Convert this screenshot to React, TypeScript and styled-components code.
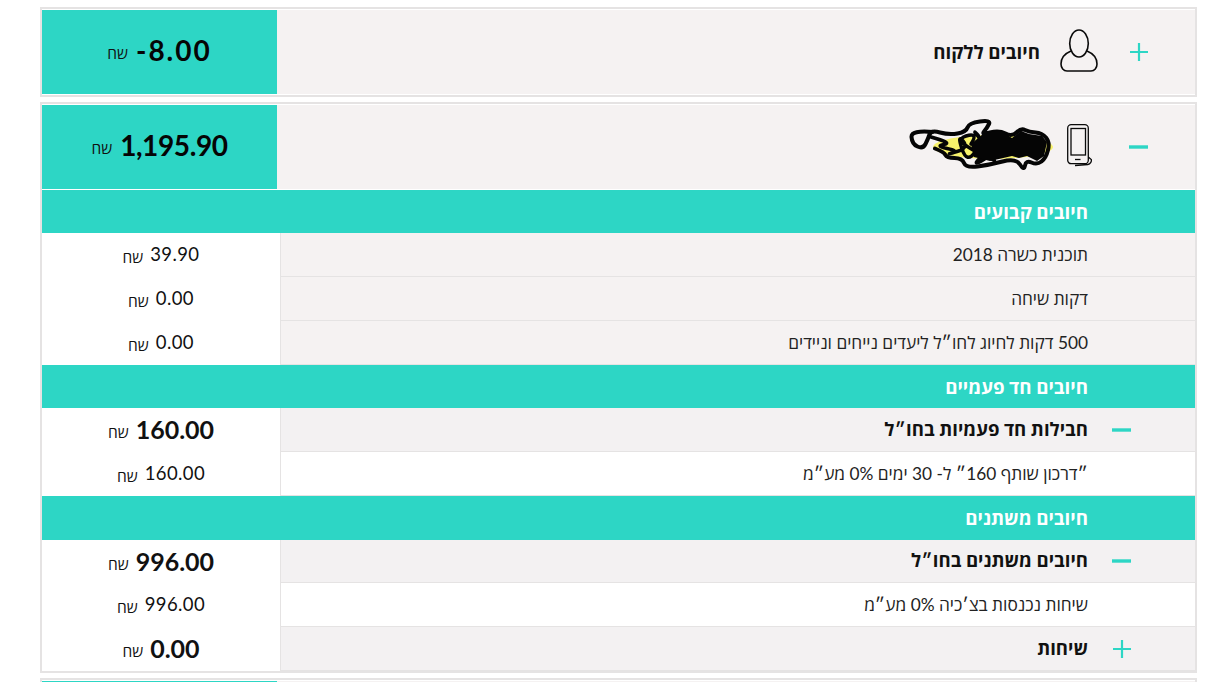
import { ReactNode } from "react";
import { createGlobalStyle, styled } from "styled-components";

const TEAL = "#2dd6c5";
const LINE = "#e5e3e3";
const FONT = `Lato, "Open Sans", "Liberation Sans", sans-serif`;

const GlobalStyle = createGlobalStyle`
  html, body {
    margin: 0;
    height: 100%;
    overflow: hidden;
    background: #fff;
  }
  body {
    font-family: ${FONT};
    color: #1c1c1c;
  }
`;

const Page = styled.div`
  display: flex;
  flex-direction: column;
  gap: 5px;
  width: 1157px;
  padding: 7px 0 0 40px;
`;

const Card = styled.section`
  border: 2px solid ${LINE};
  background: #fff;
`;

const Header = styled.header`
  display: flex;
  height: 84px;
  padding: 1px 0;
  background: #fff;
`;

const HeaderInfo = styled.div`
  flex: 1;
  display: flex;
  align-items: center;
  background: #f5f2f2;
  padding-right: 47px;
`;

const HeaderToggle = styled.span`
  display: flex;
  width: 20px;
  margin-left: 30px;
`;

const HeaderIcon = styled.span<{ $before?: number; $after?: number }>`
  display: flex;
  margin: 0 ${(p) => p.$before ?? 0}px 3px ${(p) => p.$after ?? 20}px;
`;

const HeaderTitle = styled.h2`
  margin: 0 0 2px;
  font-size: 18.7px;
  font-weight: 700;
  color: #111;
`;

const HeaderAmount = styled.div<{ $spacing?: number }>`
  width: 235px;
  display: flex;
  align-items: center;
  justify-content: center;
  gap: 8px;
  padding-bottom: 4px;
  background: ${TEAL};
  font-size: 28px;
  font-weight: 700;
  letter-spacing: ${(p) => p.$spacing ?? 0}px;
  color: #050505;
`;

const Section = styled.h3<{ $tall?: boolean }>`
  box-sizing: border-box;
  margin: 0;
  display: flex;
  align-items: center;
  height: ${(p) => (p.$tall ? 44 : 43)}px;
  padding: 0 107px ${(p) => (p.$tall ? 2 : 0)}px 0;
  background: ${TEAL};
  color: #fff;
  font-size: 18.7px;
  font-weight: 700;
`;

const Row = styled.div<{ $height?: number }>`
  display: flex;
  height: ${(p) => p.$height ?? 44}px;
`;

const RowLabel = styled.div<{ $group?: boolean; $white?: boolean }>`
  flex: 1;
  display: flex;
  align-items: center;
  padding: 0 107px ${(p) => (p.$group ? 3 : 1)}px 0;
  position: relative;
  border-bottom: 1px solid ${LINE};
  border-left: 1px solid ${LINE};
  background: ${(p) => (p.$white ? "#fff" : p.$group ? "#f3f1f2" : "#f5f2f2")};
  font-size: ${(p) => (p.$group ? 18.6 : 17.3)}px;
  font-weight: ${(p) => (p.$group ? 700 : 400)};
  color: ${(p) => (p.$group ? "#111" : "#222")};
`;

const RowToggle = styled.span`
  position: absolute;
  right: 64px;
  top: 50%;
  transform: translateY(-50%);
  display: flex;
`;

const RowAmount = styled.div<{ $bold?: boolean }>`
  width: 238px;
  display: flex;
  align-items: center;
  justify-content: center;
  gap: 7px;
  padding-bottom: 2px;
  background: #fff;
  font-size: ${(p) => (p.$bold ? 25 : 18.5)}px;
  font-weight: ${(p) => (p.$bold ? 700 : 400)};
  letter-spacing: ${(p) => (p.$bold ? 0 : 0.4)}px;
  color: #111;
`;

const Currency = styled.span`
  margin-top: 6px;
  font-family: "Open Sans", "Liberation Sans", sans-serif;
  font-size: 15.5px;
  font-weight: 400;
  letter-spacing: 0;
  color: #111;
`;

const Plus = () => (
  <svg width="18" height="18" viewBox="0 0 18 18">
    <path d="M0 9h18M9 0v18" stroke={TEAL} strokeWidth="2.200" fill="none" />
  </svg>
);

const Minus = () => (
  <svg width="19" height="4" viewBox="0 0 19 4">
    <rect y="0.300" width="19" height="3.400" fill={TEAL} />
  </svg>
);

const UserIcon = () => (
  <svg width="38" height="43" viewBox="0 0 38 43" fill="none" stroke="#0a0a0a" strokeWidth="1.600">
    <ellipse cx="19" cy="14.500" rx="9.300" ry="13.500" />
    <path d="M11 22C5 24.500 1 29 1 35c0 4 2.500 7 6 7h24c3.500 0 6-3 6-7 0-6-4-10.500-10-13" />
  </svg>
);

const PhoneIcon = () => (
  <svg width="26" height="43" viewBox="0 0 26 43" fill="none" stroke="#0a0a0a" strokeWidth="1.300">
    <rect x="1.700" y="0.700" width="20.600" height="39" rx="3.500" />
    <rect x="5" y="4.500" width="14.500" height="26.500" />
    <path d="M9 35.500h5.500" />
    <path d="M22.300 33l3 2.500c.5 2-1 4.500-3.500 5L9 41.500" />
  </svg>
);

// rounds a pen stroke through the middle of each segment
const penStroke = (points: number[][]) => {
  let d = `M${points[0][0]} ${points[0][1]}`;
  for (let i = 1; i < points.length - 1; i++) {
    const [x, y] = points[i];
    const [nx, ny] = points[i + 1];
    d += `Q${x} ${y} ${(x + nx) / 2} ${(y + ny) / 2}`;
  }
  return d;
};

const OUTLINE = [
  [24, 14], [2, 12], [3, 26], [14, 31], [19, 21], [22, 12], [40, 17], [57, 14], [60, 5], [82, 2], [78, 10],
  [72, 17], [90, 12], [103, 19], [112, 10], [120, 14], [133, 15], [141, 24], [137, 40], [128, 47], [117, 42],
  [115, 53], [107, 40], [80, 47], [57, 50], [53, 40], [38, 40], [35, 34], [17, 27],
];
const LOOPS = [
  [22, 19], [44, 25], [26, 28], [50, 33], [36, 37], [60, 30], [48, 16], [58, 46], [74, 22], [62, 10], [84, 36],
  [64, 48], [74, 36], [92, 46], [44, 22], [70, 14], [54, 38],
];

// the name is painted over in the screenshot
const Scribble = () => (
  <svg width="150" height="58" viewBox="0 0 150 58" fill="none" stroke="#050505" strokeLinecap="round" strokeLinejoin="round">
    <ellipse cx="84" cy="29" rx="60" ry="12" fill="#f7f26b" stroke="none" />
    <path d={penStroke(OUTLINE)} strokeWidth="4" />
    <path d={penStroke(LOOPS)} strokeWidth="3.500" />
    <path d="M62 26l12-10 16-4 13 8 9-7 8 3 13 2 5 6-3 14-7 5-10-5-8 2-7-2-22 5-16-4z" fill="#050505" stroke="none" />
  </svg>
);

type LineProps = {
  label: string;
  amount: string;
  height?: number;
  group?: boolean;
  white?: boolean;
  toggle?: ReactNode;
};

const Line = ({ label, amount, height, group, white, toggle }: LineProps) => (
  <Row $height={height}>
    <RowLabel $group={group} $white={white}>
      {toggle && <RowToggle>{toggle}</RowToggle>}
      {label}
    </RowLabel>
    <RowAmount $bold={group} dir="ltr">
      <Currency dir="rtl">שח</Currency>
      {amount}
    </RowAmount>
  </Row>
);

export default function App() {
  return (
    <>
      <GlobalStyle />
      <Page dir="rtl">
        <Card>
          <Header>
            <HeaderInfo>
              <HeaderToggle>
                <Plus />
              </HeaderToggle>
              <HeaderIcon>
                <UserIcon />
              </HeaderIcon>
              <HeaderTitle>חיובים ללקוח</HeaderTitle>
            </HeaderInfo>
            <HeaderAmount dir="ltr" $spacing={2}>
              <Currency dir="rtl">שח</Currency>
              -8.00
            </HeaderAmount>
          </Header>
        </Card>

        <Card>
          <Header>
            <HeaderInfo>
              <HeaderToggle>
                <Minus />
              </HeaderToggle>
              <HeaderIcon $before={6} $after={7}>
                <PhoneIcon />
              </HeaderIcon>
              <Scribble />
            </HeaderInfo>
            <HeaderAmount dir="ltr" $spacing={-0.4}>
              <Currency dir="rtl">שח</Currency>
              1,195.90
            </HeaderAmount>
          </Header>

          <Section>חיובים קבועים</Section>
          <Line label="תוכנית כשרה 2018" amount="39.90" />
          <Line label="דקות שיחה" amount="0.00" />
          <Line label="500 דקות לחיוג לחו״ל ליעדים נייחים וניידים" amount="0.00" />

          <Section>חיובים חד פעמיים</Section>
          <Line group toggle={<Minus />} label="חבילות חד פעמיות בחו״ל" amount="160.00" />
          <Line white label="״דרכון שותף 160״ ל- 30 ימים 0% מע״מ" amount="160.00" />

          <Section $tall>חיובים משתנים</Section>
          <Line group toggle={<Minus />} height={43} label="חיובים משתנים בחו״ל" amount="996.00" />
          <Line white label="שיחות נכנסות בצ׳כיה 0% מע״מ" amount="996.00" />
          <Line group toggle={<Plus />} label="שיחות" amount="0.00" />
        </Card>

        <Card>
          <Header>
            <HeaderInfo />
            <HeaderAmount />
          </Header>
        </Card>
      </Page>
    </>
  );
}
